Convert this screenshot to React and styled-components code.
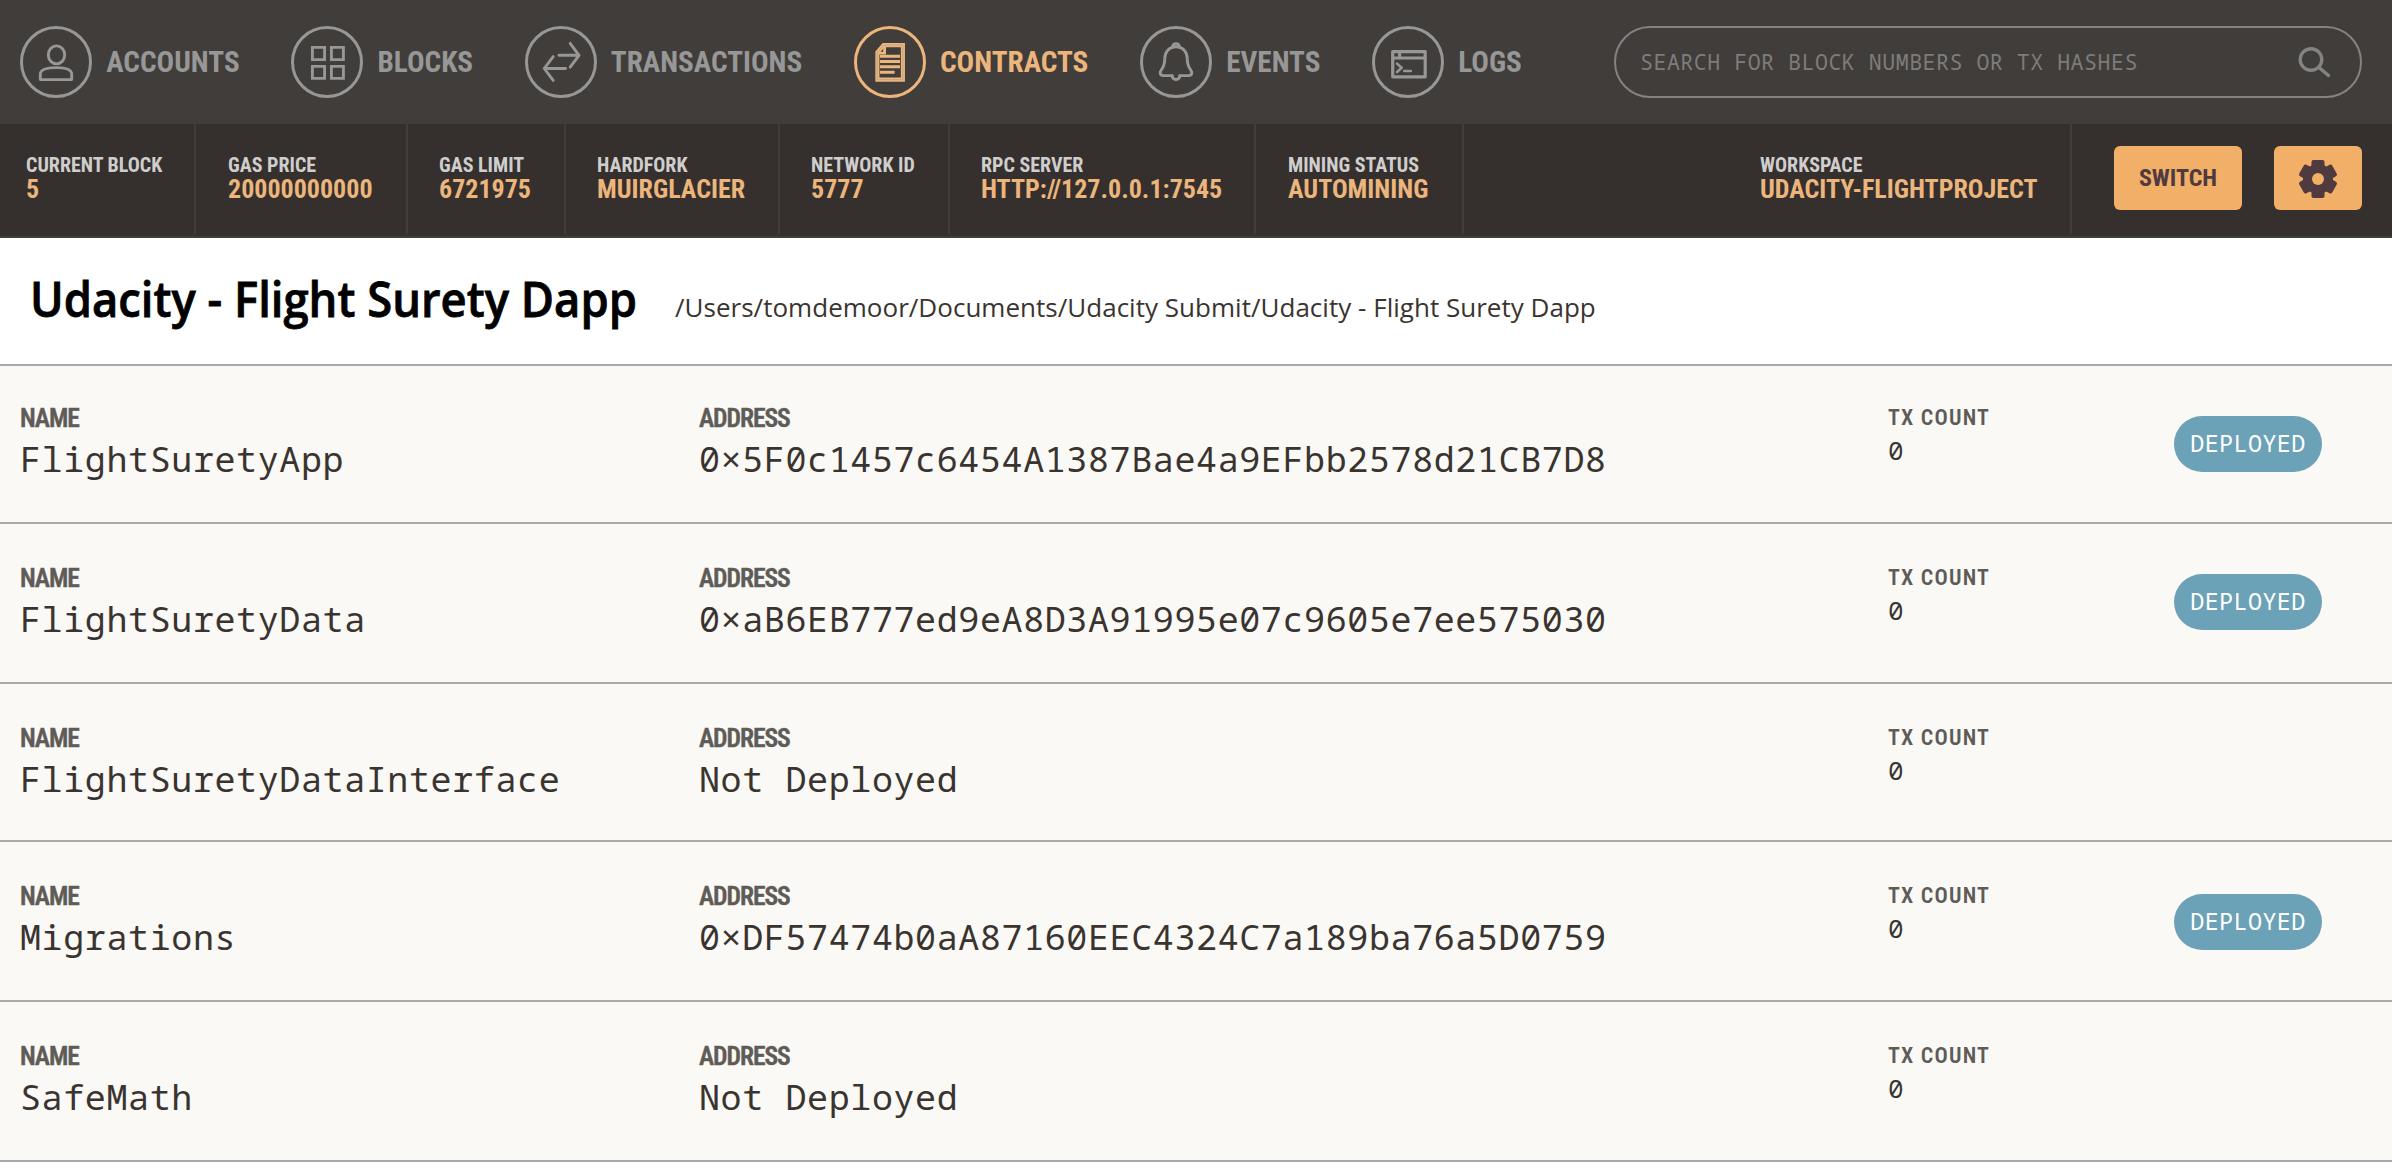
import React from "react";
import styled, { createGlobalStyle } from "styled-components";

const condensed = `"Roboto Condensed", Roboto, "Liberation Sans", sans-serif`;
const mono = `"Noto Sans Mono", "DejaVu Sans Mono", "Liberation Mono", monospace`;
const sans = `"Open Sans", "Noto Sans", sans-serif`;

const colors = {
  nav: "#413d3a",
  bar: "#35302d",
  grey: "#979797",
  orange: "#ecb57c",
  button: "#f2af67",
  plum: "#4e3a3f",
  ink: "#3a3430",
  label: "#5f5c58",
  line: "#aaa9a9",
  paper: "#faf9f5",
  badge: "#6ca2b8",
};

const GlobalStyle = createGlobalStyle`
  *, *::before, *::after { box-sizing: border-box; }
  body { margin: 0; background: #fff; }
`;

const Page = styled.div`
  width: 100%;
  min-height: 100vh;
  background: #fff;
`;

const TopNav = styled.nav`
  display: flex;
  align-items: center;
  height: 124px;
  padding: 0 30px 0 20px;
  background: ${colors.nav};
`;

const NavList = styled.div`
  display: flex;
  gap: 51.6px;
`;

const NavItem = styled.a`
  display: flex;
  align-items: center;
  gap: 14.2px;
  color: ${(p) => (p.$active ? colors.orange : colors.grey)};
  font: 700 29.2px/72px ${condensed};
`;

const IconRing = styled.span`
  display: flex;
  flex: none;
  width: 72px;
  height: 72px;
  border: 3px solid currentColor;
  border-radius: 50%;

  svg {
    flex: none;
    width: 72px;
    height: 72px;
    margin: -3px;
    fill: none;
    stroke: currentColor;
  }
`;

const SearchBox = styled.label`
  display: flex;
  align-items: center;
  justify-content: space-between;
  width: 748px;
  height: 72px;
  margin-left: auto;
  padding: 0 29px 0 24px;
  border: 2px solid #838383;
  border-radius: 36px;
`;

const Placeholder = styled.span`
  color: #7e7c7b;
  font: 400 21.6px/32px ${mono};
  letter-spacing: 0.5px;
  white-space: pre;
`;

const SearchIcon = styled.svg`
  flex: none;
  width: 34px;
  height: 34px;
  fill: none;
  stroke: #838383;
  stroke-width: 3.4;
  stroke-linecap: round;
`;

const StatusBar = styled.div`
  display: flex;
  height: 114px;
  padding: 0 30px 0 0;
  background: ${colors.bar};
  border-bottom: 2px solid ${colors.nav};
`;

const StatusItem = styled.div`
  height: 110px;
  width: ${(p) => p.$width}px;
  padding: 29px 0 0 ${(p) => p.$inset ?? 32}px;
  margin-left: ${(p) => (p.$end ? "auto" : 0)};
  border-right: 2px solid ${colors.nav};
  font-family: ${condensed};
  font-weight: 700;
  white-space: nowrap;
`;

const StatusLabel = styled.div`
  color: #cfcecd;
  font-size: 20px;
  line-height: 24px;
`;

const StatusValue = styled.div`
  color: ${colors.orange};
  font-size: 26px;
  line-height: 24px;
`;

const Actions = styled.div`
  display: flex;
  gap: 32px;
  padding: 22px 0 0 42px;
`;

const Button = styled.button`
  display: flex;
  align-items: center;
  justify-content: center;
  width: ${(p) => p.$width}px;
  height: 64px;
  padding: 0;
  border: 0;
  border-radius: 6px;
  background: ${colors.button};
  color: ${colors.plum};
  font: 700 24px/64px ${condensed};
`;

const ProjectHeader = styled.header`
  display: flex;
  align-items: baseline;
  height: 128px;
  padding: 27px 30px 0;
  border-bottom: 2px solid ${colors.line};
  font-family: ${sans};
`;

const ProjectName = styled.h1`
  margin: 0;
  width: 645px;
  color: #000;
  font-size: 48.5px;
  font-weight: 600;
  line-height: 66px;
  white-space: nowrap;
  -webkit-text-stroke: 0.8px #000;
  transform: scaleX(0.936);
  transform-origin: left;
`;

const ProjectPath = styled.span`
  color: ${colors.ink};
  font-size: 26px;
  letter-spacing: 0.02px;
  white-space: nowrap;
`;

const Row = styled.section`
  display: grid;
  grid-template-columns: 679px 1189px 286px 148px;
  align-items: start;
  height: 160px;
  padding: 39px 0 0 20px;
  background: ${colors.paper};
  border-bottom: 2px solid ${colors.line};

  &:first-child {
    height: 158px;
    padding-top: 37px;
  }
  &:nth-child(3) {
    height: 158px;
  }
`;

const FieldLabel = styled.div`
  color: ${colors.label};
  font: 600 25.6px/30px ${condensed};
  letter-spacing: -0.042em;
  -webkit-text-stroke: 0.4px ${colors.label};
`;

const FieldValue = styled.div`
  color: ${colors.ink};
  font: 400 35px/52px ${mono};
  letter-spacing: 0.61px;
  white-space: pre;
`;

const CountLabel = styled.div`
  padding-top: 2px;
  color: ${colors.label};
  font: 600 22px/26px ${condensed};
  letter-spacing: 1.2px;
`;

const CountValue = styled.div`
  color: ${colors.ink};
  font: 400 26px/38px ${mono};
`;

const Badge = styled.span`
  display: block;
  height: 56px;
  margin-top: 13px;
  border-radius: 28px;
  background: ${colors.badge};
  color: #fff;
  font: 400 23.4px/54px ${mono};
  letter-spacing: 0.4px;
  text-align: center;

  ${Row}:nth-child(2) & {
    margin-top: 11px;
  }
`;

const AccountsIcon = () => (
  <svg viewBox="0 0 72 72" strokeWidth="2.9" strokeLinejoin="round">
    <ellipse cx="36.5" cy="28.9" rx="8.2" ry="9" />
    <path d="M20.3 53.6v-5.4c0-4.2 6-6.6 16.2-6.6s15.2 2.4 15.2 6.6v5.4z" />
  </svg>
);

const BlocksIcon = () => (
  <svg viewBox="0 0 72 72" strokeWidth="2.9">
    <path d="M21.4 21.4h12.2v12.2H21.4zM40.4 21.4h12v12.2h-12zM21.4 40.4h12.2v12H21.4zM40.4 40.4h12v12h-12z" />
  </svg>
);

const TransactionsIcon = () => (
  <svg viewBox="0 0 72 72" strokeWidth="2.9" strokeLinecap="round" strokeLinejoin="round">
    <path d="M34 29.3h20M45.2 17.4l8.8 11.9-8.8 11.9M40.6 42.5H19.2M28.2 30.6l-9 11.9 9 11.9" />
  </svg>
);

const ContractsIcon = () => (
  <svg viewBox="0 0 72 72">
    <path d="M29.6 19.1h19.3v34.5H23.4V26.3z" strokeWidth="4.1" />
    <path d="M24 27.2h6.6v-7" strokeWidth="2.8" />
    <path d="M26 30.2h20M26 35.5h20M26 40.8h20M26 46.2h14.6" strokeWidth="3" />
    <path d="M29.6 19.1h19.3v34.5H23.4V26.3z" stroke="#b9a089" strokeWidth="0.8" />
  </svg>
);

const EventsIcon = () => (
  <svg viewBox="0 0 72 72" strokeWidth="2.9" strokeLinejoin="round" strokeLinecap="round">
    <path d="M32.6 21.2c.2-4.6 6.6-4.6 6.8 0M32.2 50c.3 4.6 7.3 4.6 7.6 0" />
    <path d="M32.2 49.6H23.2c-2.9 0-4.1-2.8-1.7-6 2.8-3.8 3.3-6 3.3-11.4 0-6.2 4.2-11.4 11.2-11.4s11.2 5.2 11.2 11.4c0 5.4.5 7.6 3.3 11.4 2.4 3.2 1.2 6-1.7 6h-9" />
  </svg>
);

const LogsIcon = () => (
  <svg viewBox="0 0 72 72" strokeWidth="3.2" strokeLinejoin="round">
    <path d="M20.7 25.6h32.5v25.2H20.7zM20.7 32h32.5M27.6 25.6V32" />
    <path d="M25 37.6l4.7 4.2-4.7 4.2M32.2 45h6.6" strokeWidth="2.6" strokeLinecap="round" />
  </svg>
);

const GearShape = styled.svg`
  width: 40px;
  height: 40px;
  margin-top: 2px;
  fill: currentColor;
`;

const GearIcon = () => (
  <GearShape viewBox="-20 -20 40 40">
    {[0, 60, 120].map((angle) => (
      <rect key={angle} x="-6.5" y="-19" width="13" height="38" rx="2" transform={`rotate(${angle})`} />
    ))}
    <circle r="15" />
    <circle r="6" fill={colors.button} />
  </GearShape>
);

const navItems = [
  { name: "ACCOUNTS", Icon: AccountsIcon },
  { name: "BLOCKS", Icon: BlocksIcon },
  { name: "TRANSACTIONS", Icon: TransactionsIcon },
  { name: "CONTRACTS", Icon: ContractsIcon, active: true },
  { name: "EVENTS", Icon: EventsIcon },
  { name: "LOGS", Icon: LogsIcon },
];

const statusItems = [
  { label: "CURRENT BLOCK", value: "5", width: 196, inset: 26 },
  { label: "GAS PRICE", value: "20000000000", width: 212 },
  { label: "GAS LIMIT", value: "6721975", width: 158, inset: 31 },
  { label: "HARDFORK", value: "MUIRGLACIER", width: 214, inset: 31 },
  { label: "NETWORK ID", value: "5777", width: 170, inset: 31 },
  { label: "RPC SERVER", value: "HTTP://127.0.0.1:7545", width: 306, inset: 31 },
  { label: "MINING STATUS", value: "AUTOMINING", width: 208 },
];

const contracts = [
  { name: "FlightSuretyApp", address: "0×5F0c1457c6454A1387Bae4a9EFbb2578d21CB7D8" },
  { name: "FlightSuretyData", address: "0×aB6EB777ed9eA8D3A91995e07c9605e7ee575030" },
  { name: "FlightSuretyDataInterface" },
  { name: "Migrations", address: "0×DF57474b0aA87160EEC4324C7a189ba76a5D0759" },
  { name: "SafeMath" },
];

function Status({ label, value, width, inset, end }) {
  return (
    <StatusItem $width={width} $inset={inset} $end={end}>
      <StatusLabel>{label}</StatusLabel>
      <StatusValue>{value}</StatusValue>
    </StatusItem>
  );
}

function ContractRow({ name, address }) {
  return (
    <Row>
      <div>
        <FieldLabel>NAME</FieldLabel>
        <FieldValue>{name}</FieldValue>
      </div>
      <div>
        <FieldLabel>ADDRESS</FieldLabel>
        <FieldValue>{address || "Not Deployed"}</FieldValue>
      </div>
      <div>
        <CountLabel>TX COUNT</CountLabel>
        <CountValue>0</CountValue>
      </div>
      {address && <Badge>DEPLOYED</Badge>}
    </Row>
  );
}

export default function App() {
  return (
    <Page>
      <GlobalStyle />
      <TopNav>
        <NavList>
          {navItems.map(({ name, Icon, active }) => (
            <NavItem key={name} $active={active}>
              <IconRing>
                <Icon />
              </IconRing>
              {name}
            </NavItem>
          ))}
        </NavList>
        <SearchBox>
          <Placeholder>SEARCH FOR BLOCK NUMBERS OR TX HASHES</Placeholder>
          <SearchIcon viewBox="0 0 34 34">
            <circle cx="14" cy="14.5" r="10.8" />
            <path d="M22 22.5l9.5 8" />
          </SearchIcon>
        </SearchBox>
      </TopNav>
      <StatusBar>
        {statusItems.map((item) => (
          <Status key={item.label} {...item} />
        ))}
        <Status label="WORKSPACE" value="UDACITY-FLIGHTPROJECT" width={312} inset={0} end />
        <Actions>
          <Button $width={128}>SWITCH</Button>
          <Button $width={88} aria-label="Settings">
            <GearIcon />
          </Button>
        </Actions>
      </StatusBar>
      <ProjectHeader>
        <ProjectName>Udacity - Flight Surety Dapp</ProjectName>
        <ProjectPath>/Users/tomdemoor/Documents/Udacity Submit/Udacity - Flight Surety Dapp</ProjectPath>
      </ProjectHeader>
      <main>
        {contracts.map((contract) => (
          <ContractRow key={contract.name} {...contract} />
        ))}
      </main>
    </Page>
  );
}
